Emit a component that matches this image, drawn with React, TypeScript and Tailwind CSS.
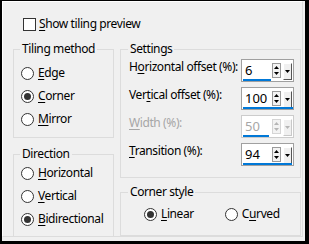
import React from 'react';

const font = { fontFamily: '"Noto Sans", "Open Sans", sans-serif' };

function Radio({ u, pre = '', checked, rest }: { u: string; pre?: string; checked?: boolean; rest: string }) {
  return (
    <div className="flex items-center h-[16px] whitespace-nowrap">
      <span className="w-[13px] h-[13px] shrink-0 rounded-full border border-[#333] bg-white flex items-center justify-center">
        {checked && <span className="w-[7px] h-[7px] rounded-full bg-[#333]" />}
      </span>
      <span className="ml-[4px]">
        {pre}
        <span className="underline underline-offset-2">{u}</span>
        {rest}
      </span>
    </div>
  );
}

function Arrow({ up, color }: { up?: boolean; color: string }) {
  return (
    <svg width="5" height="3" viewBox="0 0 5 3">
      <path d={up ? 'M0 3L2.5 0L5 3Z' : 'M0 0L5 0L2.5 3Z'} fill={color} />
    </svg>
  );
}

function Spin({ value, bar, disabled }: { value: string; bar: number; disabled?: boolean }) {
  const c = disabled ? '#b5b5b5' : '#000';
  return (
    <div
      className={`w-[53px] h-[23px] shrink-0 border bg-white flex flex-col ${disabled ? 'border-[#cccccc]' : 'border-[#a0a0a0]'}`}
    >
      <div className="flex h-[19px] items-start">
        <span className={`ml-[3px] mt-[2px] leading-[16px] text-[13px] tracking-normal flex-1 ${disabled ? 'text-[#a6a6a6]' : 'text-black'}`}>
          {value}
        </span>
        <div className={`mt-[3px] w-[9px] h-[15px] border flex flex-col items-center justify-around bg-[#f3f3f3] ${disabled ? 'border-[#d5d5d5]' : 'border-[#9a9a9a]'}`}>
          <Arrow up color={c} />
          <Arrow color={c} />
        </div>
        <div className={`mt-[3px] ml-[2px] mr-[1px] w-[9px] h-[17px] flex items-center justify-center bg-[#f0f0f0] border-t border-l border-t-white border-l-white border-r border-b ${disabled ? 'border-r-[#c8c8c8] border-b-[#c8c8c8]' : 'border-r-[#555] border-b-[#555]'}`}>
          <Arrow color={c} />
        </div>
      </div>
      <div className="h-[2px] ml-[1px] bg-[#0078d7]" style={{ width: bar }} />
    </div>
  );
}

function Row({ u, pre = '', rest, value, bar, disabled }: { u: string; pre?: string; rest: string; value: string; bar: number; disabled?: boolean }) {
  return (
    <div className="flex items-start justify-between">
      <span className={`leading-[16px] whitespace-nowrap ${disabled ? 'text-[#a6a6a6]' : ''}`}>
        {pre}
        <span className="underline underline-offset-2">{u}</span>
        {rest}
      </span>
      <Spin value={value} bar={bar} disabled={disabled} />
    </div>
  );
}

export default function App() {
  return (
    <div
      className="w-[309px] h-[244px] bg-[#f0f0f0] border-t border-l-2 border-r-4 border-b-[3px] border-black pr-[2px] pb-[4px] text-[12px] leading-[16px] tracking-[-0.4px] text-black"
      style={font}
    >
      <div className="w-full h-full border-t border-l border-t-white border-l-white border-r border-b border-r-[#dcdcdc] border-b-[#dcdcdc]">
        <div className="flex items-center h-[16px] mt-[14px] ml-[20px]">
          <span className="w-[13px] h-[13px] border border-[#333] bg-white" />
          <span className="ml-[3px]">
            <span className="underline underline-offset-2">S</span>how tiling preview
          </span>
        </div>

        <div className="flex gap-[6px] mt-[9px] ml-[10px]">
          <div className="w-[101px] flex flex-col gap-[8px]">
            <fieldset className="h-[97px] border border-[#dcdcdc] px-[7px]">
              <legend className="ml-[-1px] px-[2px]">Tiling method</legend>
              <div className="flex flex-col gap-[7px] pt-[8px]">
                <Radio u="E" rest="dge" />
                <Radio u="C" rest="orner" checked />
                <Radio u="M" rest="irror" />
              </div>
            </fieldset>
            <fieldset className="h-[91px] border border-[#dcdcdc] px-[7px]">
              <legend className="ml-[-1px] px-[2px]">Direction</legend>
              <div className="flex flex-col gap-[7px] pt-[3px]">
                <Radio u="H" rest="orizontal" />
                <Radio u="V" rest="ertical" />
                <Radio u="B" rest="idirectional" checked />
              </div>
            </fieldset>
          </div>

          <div className="w-[181px] flex flex-col gap-[6px]">
            <fieldset className="h-[137px] border border-[#dcdcdc] pl-[8px] pr-[6px]">
              <legend className="ml-[-1px] px-[2px]">Settings</legend>
              <div className="flex flex-col gap-[5px] pt-[2px]">
                <Row pre="H" u="o" rest="rizontal offset (%):" value="6" bar={28} />
                <Row pre="Ver" u="t" rest="ical offset (%):" value="100" bar={50} />
                <Row u="W" rest="idth (%):" value="50" bar={26} disabled />
                <Row u="T" rest="ransition (%):" value="94" bar={49} />
              </div>
            </fieldset>
            <fieldset className="h-[52px] border border-[#dcdcdc] pl-[8px]">
              <legend className="ml-[-1px] px-[2px]">Corner style</legend>
              <div className="flex gap-[31px] pt-[6px] pl-[15px]">
                <Radio u="L" rest="inear" checked />
                <Radio pre="C" u="u" rest="rved" />
              </div>
            </fieldset>
          </div>
        </div>
      </div>
    </div>
  );
}
